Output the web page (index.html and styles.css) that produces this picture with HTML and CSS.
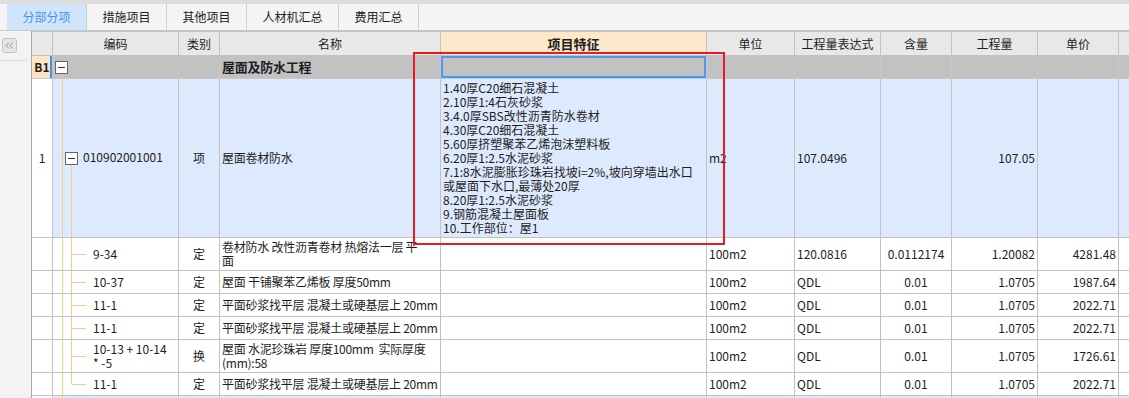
FILE: index.html
```html
<!DOCTYPE html>
<html lang="zh-CN">
<head>
    <meta charset="UTF-8">
    <title>分部分项</title>
    <link rel="stylesheet" href="styles.css">
</head>
<body>
    <!-- 页签 -->
    <div class="tabs">
        <div class="tab active">分部分项</div>
        <div class="tab">措施项目</div>
        <div class="tab">其他项目</div>
        <div class="tab tab-wide">人材机汇总</div>
        <div class="tab">费用汇总</div>
    </div>

    <div class="main">
        <!-- 左侧折叠栏 -->
        <div class="side">
            <div class="side-top">
                <button class="collapse-btn">
                    <svg width="9" height="7" viewBox="0 0 9 7"><path d="M4 0.5 L1 3.5 L4 6.5 M8 0.5 L5 3.5 L8 6.5" fill="none" stroke="#8a8a8a" stroke-width="1"/></svg>
                </button>
            </div>
        </div>

        <!-- 表格 -->
        <div class="grid-wrap">
            <table class="grid">
                <colgroup>
                    <col style="width:21px">
                    <col style="width:126px">
                    <col style="width:41px">
                    <col style="width:221px">
                    <col style="width:266px">
                    <col style="width:88px">
                    <col style="width:86px">
                    <col style="width:71px">
                    <col style="width:86px">
                    <col style="width:81px">
                    <col style="width:40px">
                </colgroup>
                <tr class="r-head">
                    <th></th>
                    <th>编码</th>
                    <th>类别</th>
                    <th>名称</th>
                    <th class="feature-head">项目特征</th>
                    <th>单位</th>
                    <th>工程量表达式</th>
                    <th>含量</th>
                    <th>工程量</th>
                    <th>单价</th>
                    <th></th>
                </tr>
                <tr class="r-b1">
                    <td class="num num-b1">B1</td>
                    <td class="code code-b1"><span class="box"></span></td>
                    <td></td>
                    <td class="name name-b1">屋面及防水工程</td>
                    <td class="selected"></td>
                    <td></td><td></td><td></td><td></td><td></td><td></td>
                </tr>
                <tr class="r-main">
                    <td class="num">1</td>
                    <td class="code code-main"><span class="box"></span>010902001001</td>
                    <td class="center">项</td>
                    <td class="name">屋面卷材防水</td>
                    <td class="feature">1.40厚C20细石混凝土<br>2.10厚1:4石灰砂浆<br>3.4.0厚SBS改性沥青防水卷材<br>4.30厚C20细石混凝土<br>5.60厚挤塑聚苯乙烯泡沫塑料板<br>6.20厚1:2.5水泥砂浆<br>7.1:8水泥膨胀珍珠岩找坡i=2%,坡向穿墙出水口<br>或屋面下水口,最薄处20厚<br>8.20厚1:2.5水泥砂浆<br>9.钢筋混凝土屋面板<br>10.工作部位：屋1</td>
                    <td>m2</td>
                    <td>107.0496</td>
                    <td></td>
                    <td class="right">107.05</td>
                    <td></td>
                    <td></td>
                </tr>
                <tr class="r-tall">
                    <td class="num"></td>
                    <td class="code code-sub">9-34</td>
                    <td class="center">定</td>
                    <td class="name">卷材防水 改性沥青卷材 热熔法一层 平<br>面</td>
                    <td></td>
                    <td>100m2</td>
                    <td>120.0816</td>
                    <td class="center">0.0112174</td>
                    <td class="right">1.20082</td>
                    <td class="right">4281.48</td>
                    <td></td>
                </tr>
                <tr class="r-std">
                    <td class="num"></td>
                    <td class="code code-sub">10-37</td>
                    <td class="center">定</td>
                    <td class="name">屋面 干铺聚苯乙烯板 厚度50mm</td>
                    <td></td>
                    <td>100m2</td>
                    <td>QDL</td>
                    <td class="center">0.01</td>
                    <td class="right">1.0705</td>
                    <td class="right">1987.64</td>
                    <td></td>
                </tr>
                <tr class="r-std">
                    <td class="num"></td>
                    <td class="code code-sub">11-1</td>
                    <td class="center">定</td>
                    <td class="name">平面砂浆找平层 混凝土或硬基层上 20mm</td>
                    <td></td>
                    <td>100m2</td>
                    <td>QDL</td>
                    <td class="center">0.01</td>
                    <td class="right">1.0705</td>
                    <td class="right">2022.71</td>
                    <td></td>
                </tr>
                <tr class="r-std">
                    <td class="num"></td>
                    <td class="code code-sub">11-1</td>
                    <td class="center">定</td>
                    <td class="name">平面砂浆找平层 混凝土或硬基层上 20mm</td>
                    <td></td>
                    <td>100m2</td>
                    <td>QDL</td>
                    <td class="center">0.01</td>
                    <td class="right">1.0705</td>
                    <td class="right">2022.71</td>
                    <td></td>
                </tr>
                <tr class="r-tall">
                    <td class="num"></td>
                    <td class="code code-sub">10-13 + 10-14<br>* -5</td>
                    <td class="center">换</td>
                    <td class="name">屋面 水泥珍珠岩 厚度100mm&nbsp; 实际厚度<br>(mm):58</td>
                    <td></td>
                    <td>100m2</td>
                    <td>QDL</td>
                    <td class="center">0.01</td>
                    <td class="right">1.0705</td>
                    <td class="right">1726.61</td>
                    <td></td>
                </tr>
                <tr class="r-std">
                    <td class="num"></td>
                    <td class="code code-sub code-last">11-1</td>
                    <td class="center">定</td>
                    <td class="name">平面砂浆找平层 混凝土或硬基层上 20mm</td>
                    <td></td>
                    <td>100m2</td>
                    <td>QDL</td>
                    <td class="center">0.01</td>
                    <td class="right">1.0705</td>
                    <td class="right">2022.71</td>
                    <td></td>
                </tr>
                <tr class="r-std r-next">
                    <td class="num"></td>
                    <td class="code code-main-top"></td>
                    <td></td><td></td><td></td><td></td><td></td><td></td><td></td><td></td><td></td>
                </tr>
            </table>
            <!-- 红色标注框 -->
            <div class="mark"></div>
        </div>
    </div>
</body>
</html>
```

FILE: styles.css
```css
* {
    margin: 0;
    padding: 0;
    box-sizing: border-box;
}

body {
    width: 1129px;
    height: 398px;
    overflow: hidden;
    background: #f3f3f3;
    font-family: "Noto Sans CJK SC", sans-serif;
    font-size: 12px;
    color: #1e1e1e;
}

/* 页签 */
.tabs {
    height: 31px;
    display: flex;
    padding-left: 7px;
    background: #f4f4f4;
    border-top: 4px solid #dddddd;
    border-bottom: 1px solid #c8c8c8;
}

.tab {
    width: 80px;
    line-height: 26px;
    text-align: center;
    color: #222;
    border-right: 1px solid #d0d0d0;
}

.tab-wide {
    width: 92px;
}

.tab.active {
    background: #cfe5fb;
    color: #4a93e6;
}

.main {
    display: flex;
    height: 367px;
}

/* 左侧 */
.side {
    width: 31px;
    flex-shrink: 0;
    background: #f3f3f3;
}

.side-top {
    width: 27px;
    height: 30px;
    padding: 7px 0 0 2px;
    border-bottom: 1px solid #d8d8d8;
}

.collapse-btn {
    display: flex;
    align-items: center;
    justify-content: center;
    width: 15px;
    height: 15px;
    background: #e6e6e6;
    border: 1px solid #c2c2c2;
    border-radius: 3px;
}

/* 表格 */
.grid-wrap {
    position: relative;
    flex: 1;
    overflow: hidden;
    background: #fff;
    border-left: 1px solid #a8a8a8;
}

.grid {
    --tree: #fbc88d;
    width: 1127px;
    border-collapse: collapse;
    table-layout: fixed;
    margin-left: -1px;
}

.grid th,
.grid td {
    border: 1px solid #c2c2c2;
    padding: 0 2px;
    white-space: nowrap;
    overflow: hidden;
    vertical-align: middle;
    text-align: left;
    line-height: 14px;
}

.grid th {
    background: #e8e8e8;
    font-weight: normal;
    text-align: center;
}

.grid .feature-head {
    background: #fde8c9;
    font-weight: bold;
    font-size: 13px;
}

.r-head { height: 24px; }
.r-b1 { height: 23px; }
.r-main { height: 159px; }
.r-tall { height: 33px; }
.r-std { height: 23px; }

.r-b1 td {
    background: #c2c2c2;
    border-color: #c8c8c8;
}

.r-main td,
.r-next td {
    background: #dde9fc;
}

.grid td.num {
    background: #fff;
    text-align: center;
    padding: 0;
}

.grid .r-b1 td.num {
    background: #fde4c4;
    font-weight: bold;
    box-shadow: inset -2px 0 0 #3d8fe8;
}

.grid td.center { text-align: center; }
.grid td.right { text-align: right; }

.grid td.name {
    letter-spacing: -0.25px;
}

.grid .name-b1 {
    font-weight: bold;
    font-size: 13px;
    letter-spacing: 0;
}

.grid td.selected {
    box-shadow: inset 0 0 0 2px #4a98f2;
}

.grid td.feature {
    padding-left: 2px;
}

/* 树形线 */
.box {
    display: inline-block;
    width: 13px;
    height: 13px;
    margin-right: 5px;
    vertical-align: middle;
    position: relative;
    top: -1px;
    background: #fff linear-gradient(#333, #333) no-repeat center / 7px 1px;
    border: 1px solid #666;
}

.grid td.code-b1 {
    padding-left: 2px;
    background:
        linear-gradient(var(--tree), var(--tree)) no-repeat 9px 100% / 1px calc(50% - 7px),
        #c2c2c2;
}

.grid td.code-main {
    padding-left: 12px;
    background:
        linear-gradient(var(--tree), var(--tree)) no-repeat 9px 0 / 1px 100%,
        linear-gradient(var(--tree), var(--tree)) no-repeat 9px 50% / 4px 1px,
        linear-gradient(var(--tree), var(--tree)) no-repeat 18px 100% / 1px calc(50% - 6px),
        #dde9fc;
}

.grid td.code-sub {
    padding-left: 40px;
    background:
        linear-gradient(var(--tree), var(--tree)) no-repeat 9px 0 / 1px 100%,
        linear-gradient(var(--tree), var(--tree)) no-repeat 18px 0 / 1px 100%,
        linear-gradient(var(--tree), var(--tree)) no-repeat 19px 50% / 14px 1px;
}

.grid td.code-last {
    background:
        linear-gradient(var(--tree), var(--tree)) no-repeat 9px 0 / 1px 100%,
        linear-gradient(var(--tree), var(--tree)) no-repeat 18px 0 / 1px 50%,
        linear-gradient(var(--tree), var(--tree)) no-repeat 19px 50% / 14px 1px;
}

.grid td.code-main-top {
    background:
        linear-gradient(var(--tree), var(--tree)) no-repeat 9px 0 / 1px 100%,
        #dde9fc;
}

.r-next td {
    border-top-color: #b9cbe6;
}

/* 红框 */
.mark {
    position: absolute;
    left: 381px;
    top: 21px;
    width: 312px;
    height: 193px;
    border: 2px solid #e51b23;
}
```
